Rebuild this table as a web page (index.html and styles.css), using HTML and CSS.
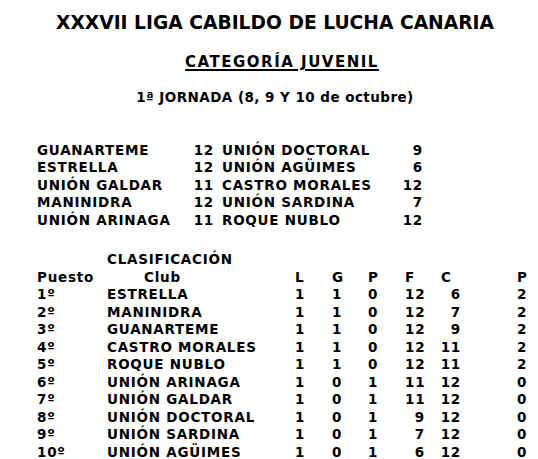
FILE: index.html
```html
<!DOCTYPE html>
<html lang="es">
<head>
<meta charset="utf-8">
<link rel="stylesheet" href="styles.css">
</head>
<body>
<div class="page">
  <h1 class="title">XXXVII LIGA CABILDO DE LUCHA CANARIA</h1>
  <h2 class="category">CATEGORÍA JUVENIL</h2>
  <h3 class="round">1ª JORNADA (8, 9 Y 10 de octubre)</h3>

  <div class="matches">
    <span>GUANARTEME</span><span class="num">12</span><span>UNIÓN DOCTORAL</span><span class="num">9</span>
    <span>ESTRELLA</span><span class="num">12</span><span>UNIÓN AGÜIMES</span><span class="num">6</span>
    <span>UNIÓN GALDAR</span><span class="num">11</span><span>CASTRO MORALES</span><span class="num">12</span>
    <span>MANINIDRA</span><span class="num">12</span><span>UNIÓN SARDINA</span><span class="num">7</span>
    <span>UNIÓN ARINAGA</span><span class="num">11</span><span>ROQUE NUBLO</span><span class="num">12</span>
  </div>

  <div class="standings">
    <span class="caption">CLASIFICACIÓN</span>
    <span>Puesto</span><span class="club-head">Club</span><span>L</span><span>G</span><span>P</span><span>F</span><span class="c-head">C</span><span></span><span>P</span>

    <span>1º</span><span>ESTRELLA</span><span>1</span><span>1</span><span>0</span><span class="num">12</span><span class="num">6</span><span></span><span>2</span>
    <span>2º</span><span>MANINIDRA</span><span>1</span><span>1</span><span>0</span><span class="num">12</span><span class="num">7</span><span></span><span>2</span>
    <span>3º</span><span>GUANARTEME</span><span>1</span><span>1</span><span>0</span><span class="num">12</span><span class="num">9</span><span></span><span>2</span>
    <span>4º</span><span>CASTRO MORALES</span><span>1</span><span>1</span><span>0</span><span class="num">12</span><span class="num">11</span><span></span><span>2</span>
    <span>5º</span><span>ROQUE NUBLO</span><span>1</span><span>1</span><span>0</span><span class="num">12</span><span class="num">11</span><span></span><span>2</span>
    <span>6º</span><span>UNIÓN ARINAGA</span><span>1</span><span>0</span><span>1</span><span class="num">11</span><span class="num">12</span><span></span><span>0</span>
    <span>7º</span><span>UNIÓN GALDAR</span><span>1</span><span>0</span><span>1</span><span class="num">11</span><span class="num">12</span><span></span><span>0</span>
    <span>8º</span><span>UNIÓN DOCTORAL</span><span>1</span><span>0</span><span>1</span><span class="num">9</span><span class="num">12</span><span></span><span>0</span>
    <span>9º</span><span>UNIÓN SARDINA</span><span>1</span><span>0</span><span>1</span><span class="num">7</span><span class="num">12</span><span></span><span>0</span>
    <span>10º</span><span>UNIÓN AGÜIMES</span><span>1</span><span>0</span><span>1</span><span class="num">6</span><span class="num">12</span><span></span><span>0</span>
  </div>
</div>
</body>
</html>
```

FILE: styles.css
```css
html, body {
  margin: 0;
  padding: 0;
  background: #fff;
}

body {
  font-family: "DejaVu Sans", Verdana, sans-serif;
  font-weight: bold;
  color: #000;
  width: 538px;
  height: 459px;
  overflow: hidden;
}

.page {
  padding: 11px 0 0 12px;
}

.title,
.category,
.round {
  margin: 0;
  text-align: center;
  font-weight: bold;
}

.title {
  font-size: 18.7px;
  line-height: 23px;
}

.category {
  font-size: 15px;
  line-height: 18px;
  margin-top: 19px;
  padding-left: 14px;
  letter-spacing: 1.5px;
  text-decoration: underline;
  text-decoration-thickness: 1.5px;
  text-underline-offset: 2px;
}

.round {
  font-size: 13.5px;
  line-height: 18px;
  margin-top: 17px;
  letter-spacing: 0.45px;
}

.matches {
  display: grid;
  grid-template-columns: 148px 28px 9px 178px 22px;
  margin: 36px 0 0 25px;
  font-size: 13.5px;
  line-height: 17.4px;
  letter-spacing: 0.75px;
}

.matches > span:nth-child(4n+3) {
  grid-column: 4;
}

.matches .num {
  text-align: right;
  margin-right: -1px;
}

.standings {
  display: grid;
  grid-template-columns: 70px 188px 37px 36px 37px 19px 36px 57px 20px;
  margin: 22px 0 0 25px;
  font-size: 13.5px;
  line-height: 17.5px;
  letter-spacing: 0.75px;
}

.standings .caption {
  grid-column: 2 / span 8;
}

.standings .num {
  text-align: right;
  margin-right: -1px;
}

.club-head {
  padding-left: 37px;
}

.c-head {
  padding-left: 17px;
}
```
